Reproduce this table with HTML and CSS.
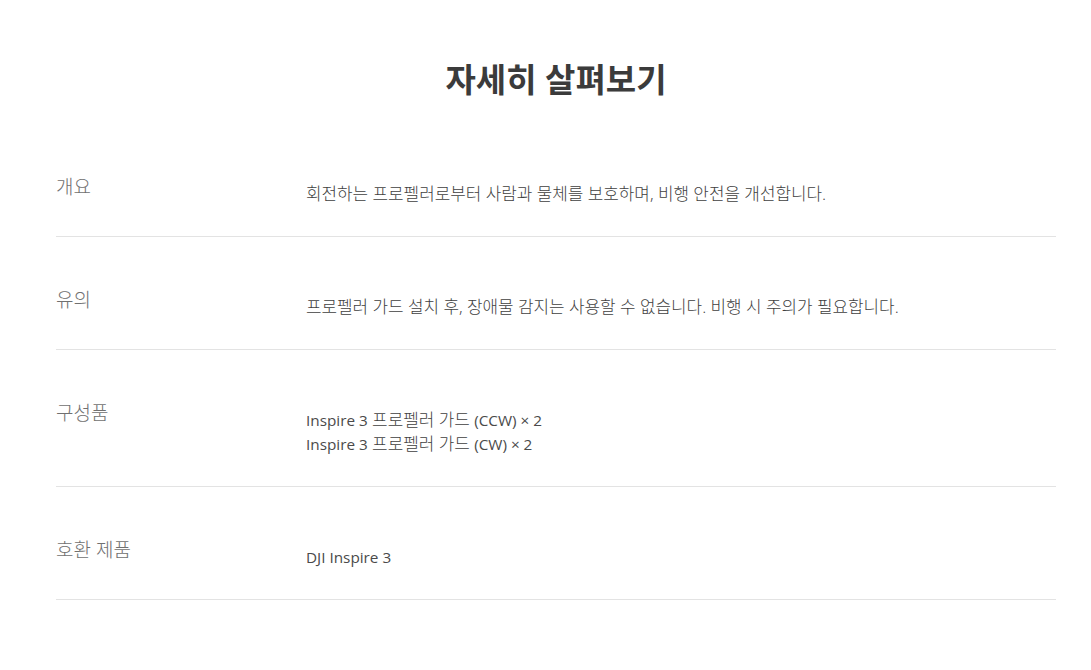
FILE: index.html
```html
<!DOCTYPE html>
<html lang="ko">
<head>
<meta charset="utf-8">
<title>자세히 살펴보기</title>
<link rel="stylesheet" href="styles.css">
</head>
<body>
<main class="specs">
  <h1 class="title">자세히 살펴보기</h1>
  <div class="row">
    <div class="label">개요</div>
    <div class="value">회전하는 프로펠러로부터 사람과 물체를 보호하며, 비행 안전을 개선합니다.</div>
  </div>
  <div class="row">
    <div class="label">유의</div>
    <div class="value">프로펠러 가드 설치 후, 장애물 감지는 사용할 수 없습니다. 비행 시 주의가 필요합니다.</div>
  </div>
  <div class="row">
    <div class="label">구성품</div>
    <div class="value"><span class="lat">Inspire 3</span> 프로펠러 가드 <span class="lat">(CCW) × 2</span><br><span class="lat">Inspire 3</span> 프로펠러 가드 <span class="lat">(CW) × 2</span></div>
  </div>
  <div class="row">
    <div class="label">호환 제품</div>
    <div class="value"><span class="lat">DJI Inspire 3</span></div>
  </div>
</main>
</body>
</html>
```
FILE: styles.css
```css
* { box-sizing: border-box; }
body {
  margin: 0;
  background: #fff;
  font-family: "Open Sans", "Noto Sans CJK KR", sans-serif;
}
.specs {
  width: 1000px;
  margin-left: 56px;
  padding-top: 60px;
}
.title {
  margin: 0 0 24px;
  text-align: center;
  font-size: 33px;
  line-height: 40px;
  font-weight: 700;
  color: #3b3b3b;
}
.row {
  display: flex;
  padding: 51px 0 30px;
  border-bottom: 1px solid #e3e3e3;
}
.label {
  width: 250px;
  flex: none;
  font-size: 19px;
  line-height: 24px;
  font-weight: 300;
  color: #707070;
}
.value {
  margin-top: 7px;
  font-size: 16.9px;
  line-height: 24px;
  font-weight: 300;
  color: #3f3f3f;
}
.lat {
  font-size: 15.3px;
  font-weight: 400;
  color: #4a4a4a;
}
```
